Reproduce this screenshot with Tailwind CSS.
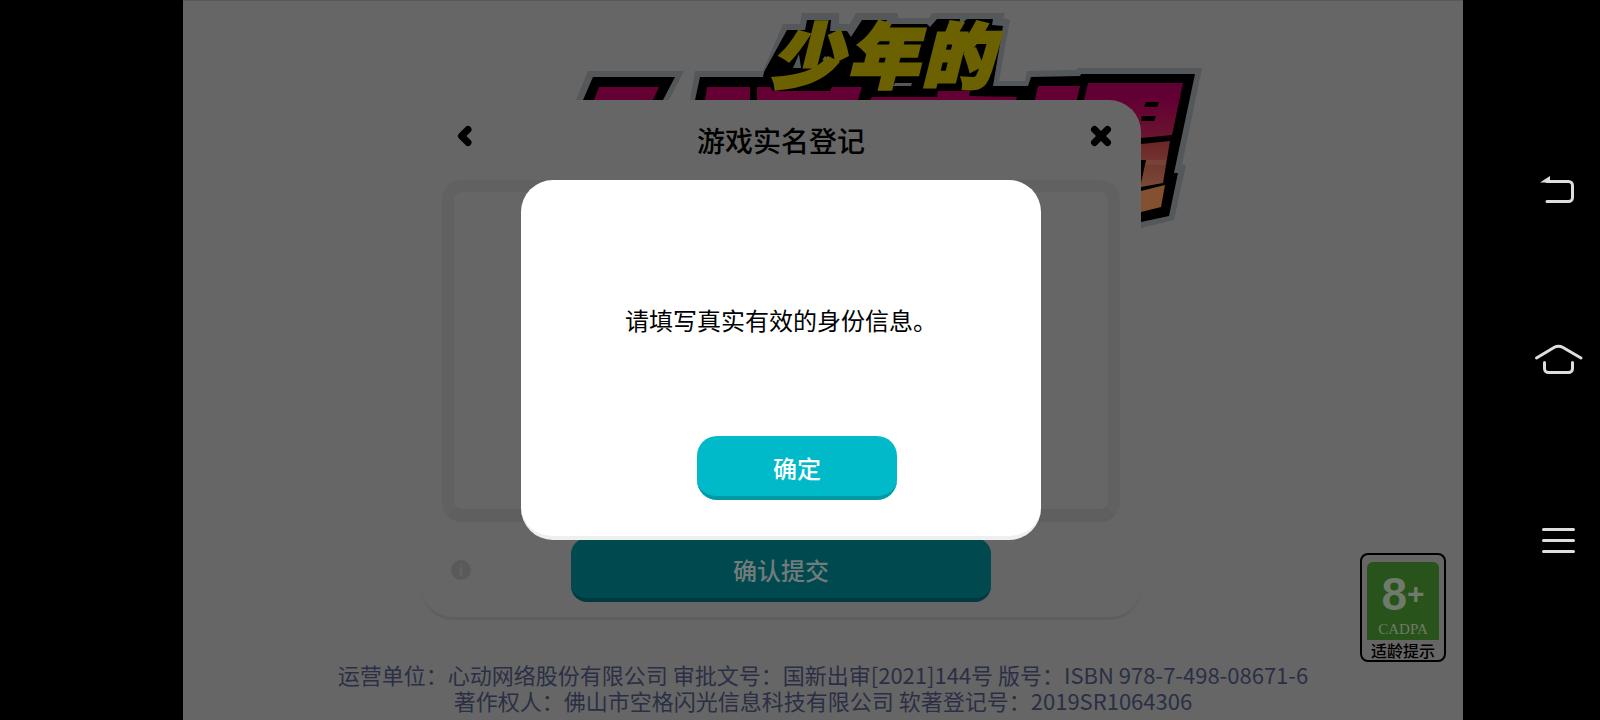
<!DOCTYPE html>
<html lang="zh-CN">
<head>
  <meta charset="UTF-8" />
  <title>游戏实名登记</title>
  <meta name="viewport" content="width=device-width, initial-scale=1.0" />
  <script src="https://cdn.jsdelivr.net/npm/@tailwindcss/browser@4"></script>
</head>
<body class="min-h-screen bg-black flex font-['Noto_Sans_CJK_SC',sans-serif]">
  <main class="relative flex-1 min-h-screen ml-[183px] flex flex-col bg-[#666666] border-t border-[#585858] overflow-hidden">

    <!-- game logo -->
    <svg class="absolute top-0 left-1/2 -ml-[263px] w-[660px] h-[240px]" viewBox="560 1 660 240" role="img" aria-label="少年的">
      <defs>
        <linearGradient id="pink" x1="0" y1="0" x2="0" y2="1">
          <stop offset="0" stop-color="#5f0034" />
          <stop offset="0.3" stop-color="#640033" />
          <stop offset="1" stop-color="#6b1730" />
        </linearGradient>
        <linearGradient id="sunset" x1="0" y1="0" x2="0" y2="1">
          <stop offset="0" stop-color="#6a2427" />
          <stop offset="1" stop-color="#7b4a36" />
        </linearGradient>
      </defs>
      <g fill="#54585a">
        <path d="M576 100L588 71H684L669 100Z" />
        <path d="M690 100L695 71H763L783 24H800L802 13H839V24H850L856 13H898V18H929L932 13H1005L1003 18L1010 20L999 81H1025L1027 71L1077 70V68H1202L1182 165H1186L1174 220L1141 228L1100 150V100Z" />
      </g>
      <g fill="#000">
        <path d="M583 100L593 77H675L663 100Z" />
        <path d="M695 100L700 77H763L764 72L787 30H805L807 20H831L830 31H847L851 37L862 20H887L885 24H927L930 27L937 19H960L959 26L967 19H993L992 25L1003 26L993 86H1028L1031 77L1080 76L1081 74H1195L1174 173H1178L1169 216L1141 222L1100 150V100Z" />
      </g>
      <path fill="#54585a" d="M893 86L895 83H912L911 86ZM793 68L799 54L801 68ZM822 60L825 56L830 60Z" />
      <g fill="#640033">
        <path d="M594 100L599 87H659L653 100Z" />
        <path d="M705 100L707 87H750V100Z" />
        <path d="M757 100V87H770L773 91H830L832 87H862L858 100Z" />
        <path d="M870 100L872 97H937L938 91H970L969 96L1017 97L1016 100Z" />
        <path d="M1035 100L1038 86H1080L1077 100Z" />
      </g>
      <path fill="url(#pink)" d="M1084 100L1088 83H1183L1172 135L1141 138L1110 141V110Z" />
      <path d="M1146 102H1159L1157 107H1144ZM1142 116H1156L1154 121H1141Z" />
      <path fill="url(#sunset)" d="M1141 144L1170 141L1163 183L1141 187Z" />
      <path fill="#774336" d="M1146 160H1166L1165 165H1145Z" />
      <path d="M1139 160H1146L1141 183H1139Z" />
      <path fill="#83512f" d="M1141 191L1165 185L1161 207L1141 212Z" />
      <text x="772 848 922" y="82" font-size="70" font-weight="900" font-style="italic" fill="#6b6100" stroke="#6b6100" stroke-width="4">少年的</text>
    </svg>

    <!-- real-name registration card -->
    <section class="relative mt-[99px] mr-[84px] self-center w-[720px] bg-[#666666] rounded-[32px] border-b-3 border-[#5e5e5e] pb-[15px]">
      <header class="h-20 pl-5 pr-4 pb-1 flex items-center justify-between">
        <button type="button" aria-label="返回" class="size-12 mb-1 flex items-center justify-center">
          <svg class="size-6" viewBox="0 0 24 24" fill="none" stroke="#000" stroke-width="7" stroke-linecap="round" stroke-linejoin="round">
            <path d="M15 5.5L8.500 12l6.500 6.500" />
          </svg>
        </button>
        <h1 class="pt-1 pr-1 text-[28px] leading-8 font-medium text-black">游戏实名登记</h1>
        <button type="button" aria-label="关闭" class="size-12 mb-1 flex items-center justify-center">
          <svg class="size-6" viewBox="0 0 24 24" fill="none" stroke="#000" stroke-width="7" stroke-linecap="round">
            <path d="M5.500 5.500l13 13M18.500 5.500l-13 13" />
          </svg>
        </button>
      </header>
      <div class="mx-[21px] h-[342px] rounded-[20px] border-[12px] border-b-[13px] border-[#616161] border-b-[#5f5f5f] bg-[#666666]"></div>
      <div class="relative mt-4 flex justify-center">
        <svg class="absolute left-[30px] top-[22px] size-5" viewBox="0 0 20 20" role="img" aria-label="说明">
          <circle cx="10" cy="10" r="10" fill="#5a5a5a" />
          <path d="M10 4.5v1.5M8.5 8.5H10V14.5M8 14.5h4" fill="none" stroke="#646464" stroke-width="2" />
        </svg>
        <button type="button" class="w-[420px] h-16 pt-1 rounded-2xl bg-[#004a4f] border-b-4 border-[#003a3f] text-2xl font-medium text-[#737b7c]">确认提交</button>
      </div>
    </section>

    <footer class="mt-auto pb-[7px] text-center text-[22px] leading-[26px] text-[#2a2f45]">
      <p>运营单位：心动网络股份有限公司 审批文号：国新出审[2021]144号 版号：ISBN 978-7-498-08671-6</p>
      <p>著作权人：佛山市空格闪光信息科技有限公司 软著登记号：2019SR1064306</p>
    </footer>

    <!-- age rating badge -->
    <a href="#" class="absolute right-[17px] bottom-[58px] w-[86px] h-[109px] pt-[7px] rounded-lg border-2 border-black flex flex-col items-center">
      <span class="w-[72px] h-[78px] shrink-0 rounded-t-md bg-[#28531a] text-[#707a6c] flex flex-col items-center justify-end">
        <span class="flex items-center font-['Liberation_Sans',sans-serif] font-bold">
          <span class="text-[46px] leading-[48px]">8</span>
          <span class="text-[30px] leading-[48px]">+</span>
        </span>
        <span class="font-['Liberation_Serif',serif] text-[15px] leading-[22px]">CADPA</span>
      </span>
      <span class="text-base leading-5 font-medium text-black whitespace-nowrap">适龄提示</span>
    </a>

    <!-- message dialog -->
    <div class="absolute inset-0 pr-[84px] pb-px flex items-center justify-center">
      <div role="dialog" aria-modal="true" aria-labelledby="message" class="w-[520px] h-[360px] mb-px pb-9 rounded-[32px] bg-white border-b-4 border-[#efefef] flex flex-col items-center">
        <p id="message" class="mt-auto mb-[98px] text-2xl leading-9 text-black">请填写真实有效的身份信息。</p>
        <button type="button" class="ml-8 w-[200px] h-16 pt-1 rounded-[20px] bg-[#00bac9] border-b-4 border-[#009aa6] text-2xl font-medium text-white">确定</button>
      </div>
    </div>
  </main>

  <!-- system navigation -->
  <nav class="w-[137px] pr-[13px] flex flex-col items-end justify-center gap-[120px]">
    <button type="button" aria-label="返回键" class="size-14">
      <svg class="size-14" viewBox="0 0 56 56" fill="none" stroke="#dedede" stroke-width="3" stroke-linecap="round">
        <path d="M16 25.5H37.500a4 4 0 0 1 4 4V41.500a4 4 0 0 1-4 4H16" />
        <path d="M9 26.500L19 20v6.500Z" fill="#dedede" stroke="none" />
      </svg>
    </button>
    <button type="button" aria-label="主屏幕" class="size-14">
      <svg class="size-14" viewBox="0 0 56 56" fill="none" stroke="#dedede" stroke-width="3" stroke-linecap="round">
        <path d="M5.500 26L23 15.500Q27.500 13 32 15.500L50 26" />
        <path d="M13.500 30.500V36.500a4 4 0 0 0 4 4H37.500a4 4 0 0 0 4-4V30.500" />
      </svg>
    </button>
    <button type="button" aria-label="菜单" class="size-14">
      <svg class="size-14" viewBox="0 0 56 56" fill="none" stroke="#dedede" stroke-width="3" stroke-linecap="round">
        <path d="M12.500 21.500h30M12.500 32.500h30M12.500 43.500h30" />
      </svg>
    </button>
  </nav>
</body>
</html>
